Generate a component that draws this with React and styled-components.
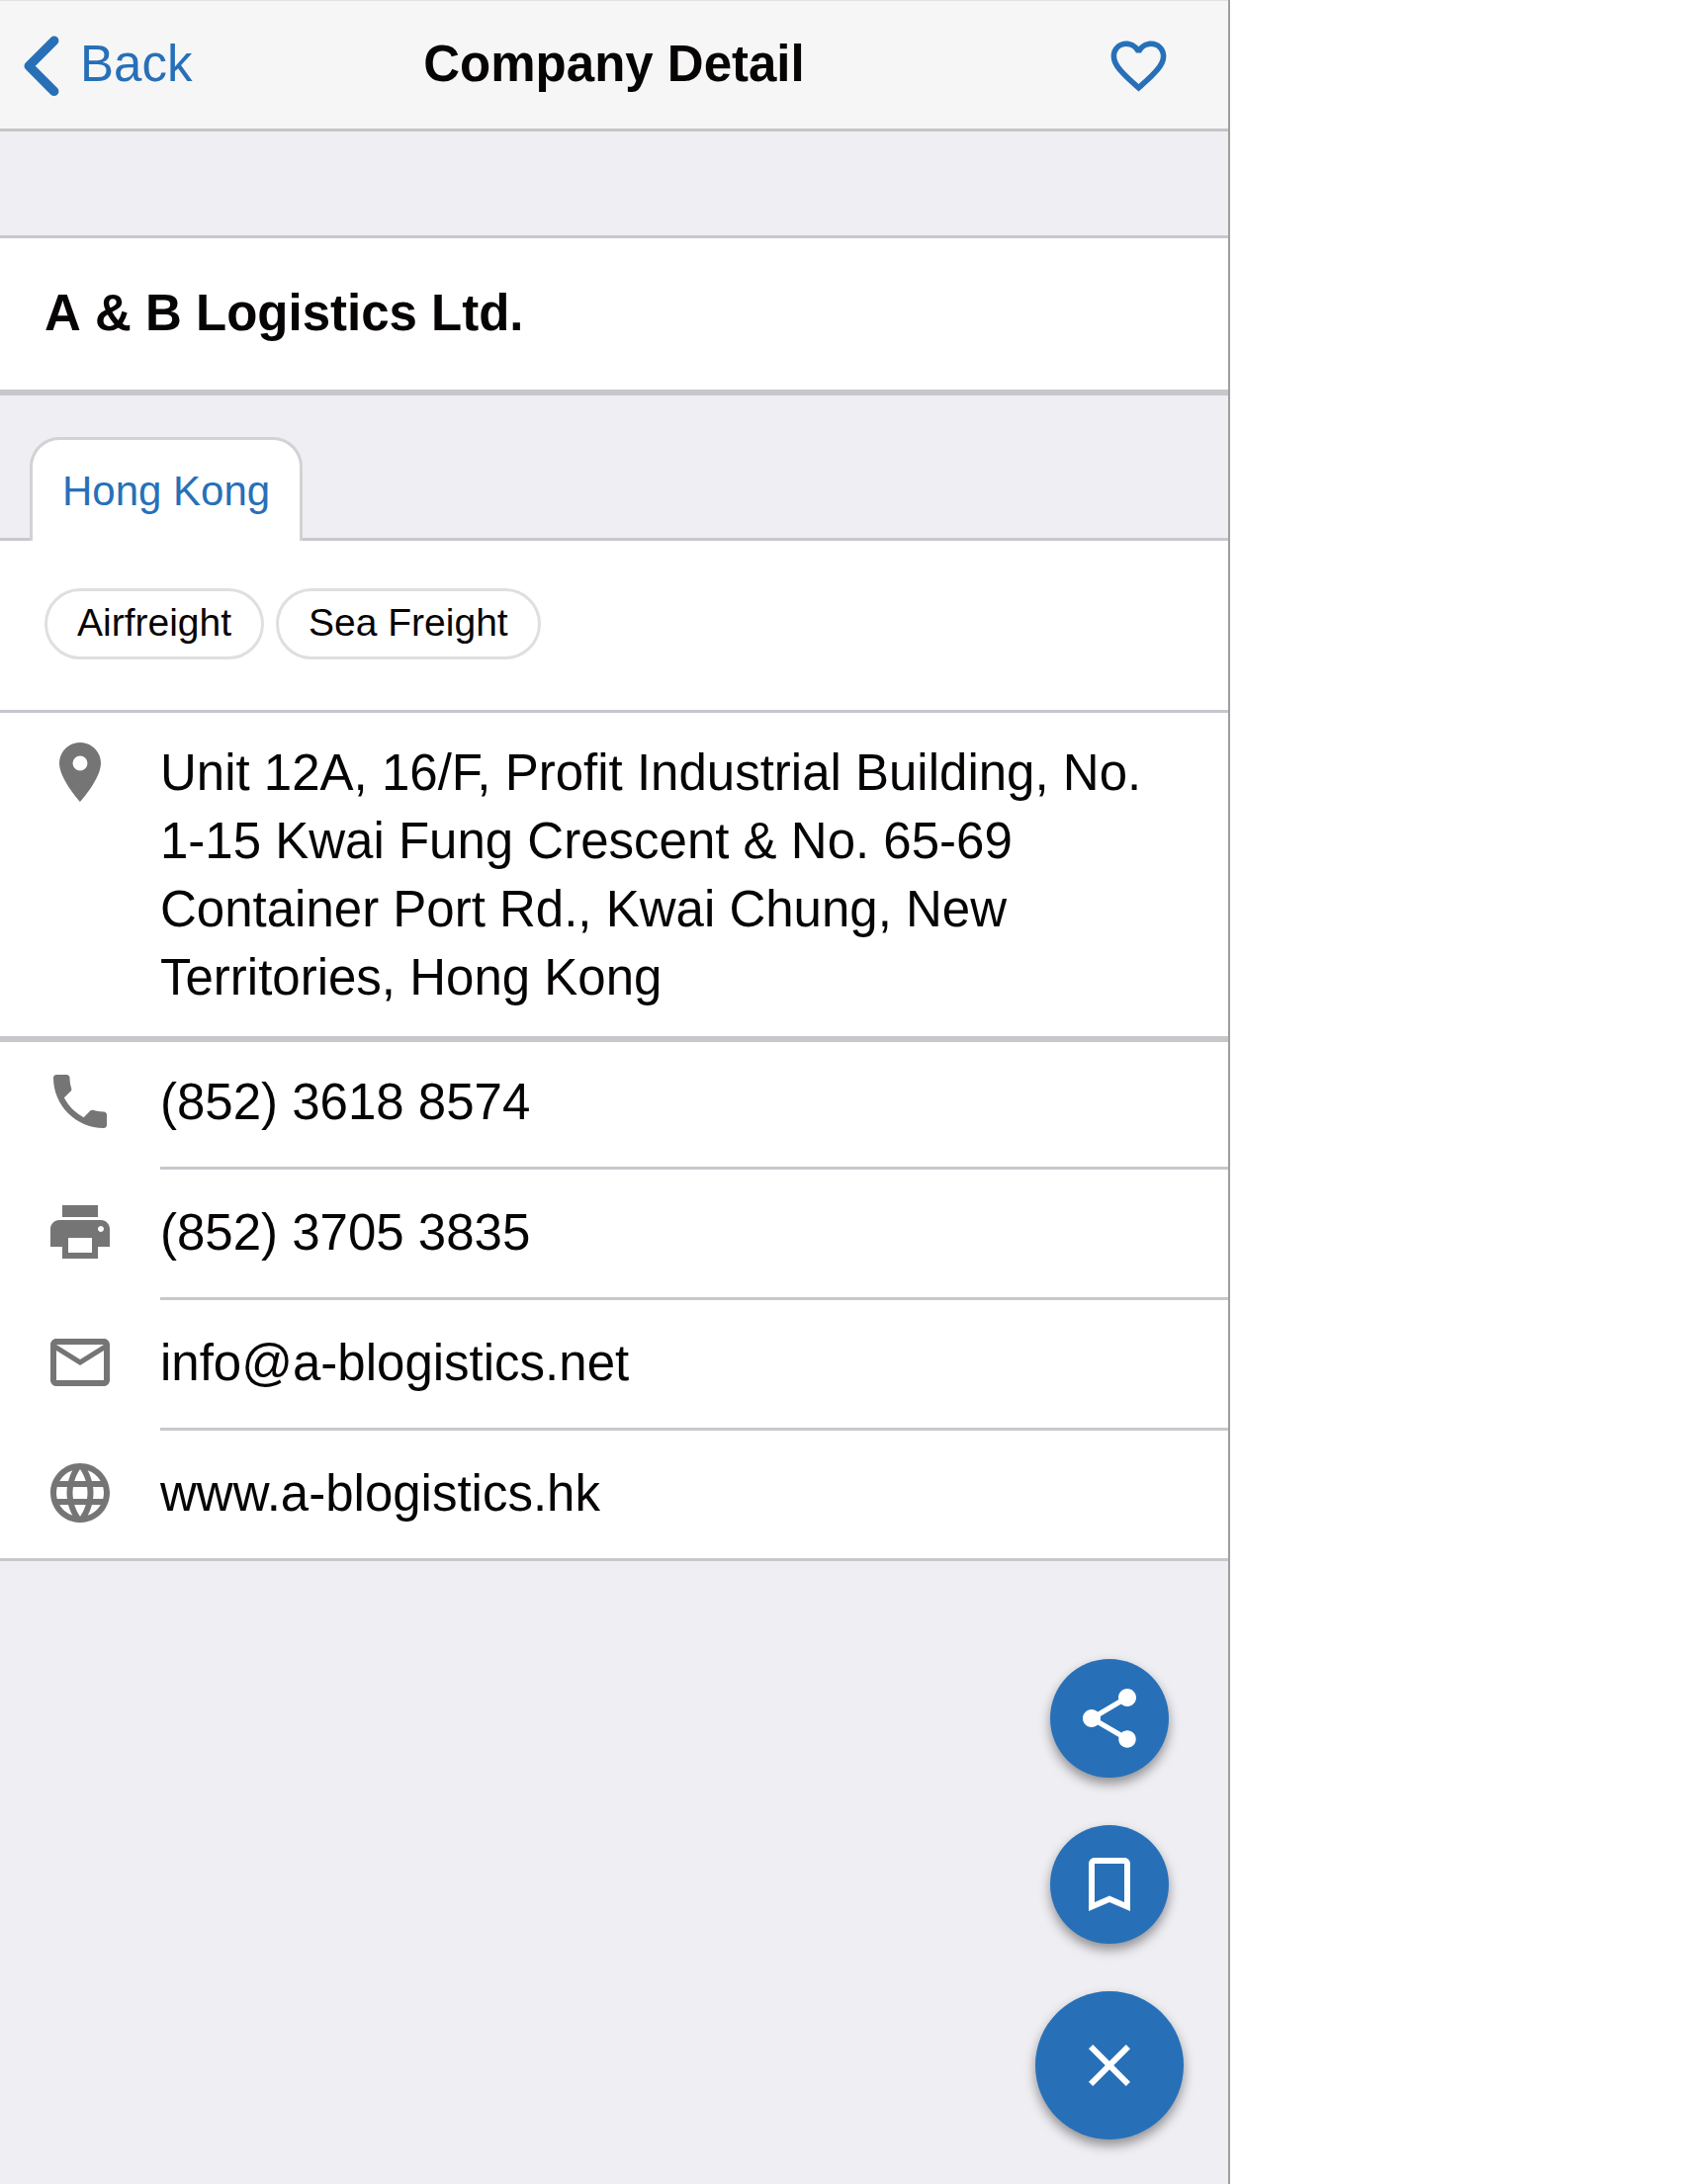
import React from 'react'
import styled, { createGlobalStyle } from 'styled-components'
import {
  MdBookmarkBorder,
  MdClose,
  MdFavoriteBorder,
  MdLanguage,
  MdMailOutline,
  MdPhone,
  MdPlace,
  MdPrint,
  MdShare,
} from 'react-icons/md'

const services = ['Airfreight', 'Sea Freight']

const contacts = [
  { icon: MdPhone, label: '(852) 3618 8574', href: 'tel:+85236188574' },
  { icon: MdPrint, label: '(852) 3705 3835', href: 'tel:+85237053835' },
  { icon: MdMailOutline, label: 'info@a-blogistics.net', href: 'mailto:info@a-blogistics.net' },
  { icon: MdLanguage, label: 'www.a-blogistics.hk', href: 'http://www.a-blogistics.hk' },
]

export default function App() {
  return (
    <>
      <GlobalStyle />
      <Screen>
        <Header>
          <BackButton type='button'>
            <svg width='36' height='62' viewBox='0 0 36 62' aria-hidden='true'>
              <path
                d='M30.7 5.2 L5.2 30.8 L30.7 56.4'
                fill='none'
                stroke='currentColor'
                strokeWidth='9.4'
                strokeLinecap='round'
                strokeLinejoin='round'
              />
            </svg>
            <span>Back</span>
          </BackButton>
          <HeaderTitle>Company Detail</HeaderTitle>
          <LikeButton type='button' aria-label='Add to favourites'>
            <MdFavoriteBorder />
          </LikeButton>
        </Header>

        <main>
          <Company>
            <h2>A &amp; B Logistics Ltd.</h2>
          </Company>

          <Tabs role='tablist'>
            <Tab type='button' role='tab' aria-selected='true'>Hong Kong</Tab>
          </Tabs>

          <Panel role='tabpanel'>
            <Chips>
              {services.map((name) => (
                <Chip key={name}>{name}</Chip>
              ))}
            </Chips>
            <Address>
              <MdPlace />
              <p>
                Unit 12A, 16/F, Profit Industrial Building, No. 1-15 Kwai Fung Crescent &amp; No.
                65-69 Container Port Rd., Kwai Chung, New Territories, Hong Kong
              </p>
            </Address>
            <Contacts>
              {contacts.map(({ icon: Icon, label, href }) => (
                <Contact key={label}>
                  <Icon />
                  <a href={href}>{label}</a>
                </Contact>
              ))}
            </Contacts>
          </Panel>
        </main>

        <Actions>
          <Fab type='button' aria-label='Share'><MdShare /></Fab>
          <Fab type='button' aria-label='Bookmark'><MdBookmarkBorder /></Fab>
          <Fab type='button' aria-label='Close' $large><MdClose /></Fab>
        </Actions>
      </Screen>
    </>
  )
}

const GlobalStyle = createGlobalStyle`
  * {
    box-sizing: border-box;
  }
  body {
    margin: 0;
    background-color: #fff;
    color: #070404;
    font-family: "Liberation Sans", Arial, sans-serif;
    font-size: 51px;
  }
  h1, h2, p, ul {
    margin: 0;
    padding: 0;
    font-size: inherit;
  }
  button {
    margin: 0;
    padding: 0;
    border: none;
    background: none;
    font: inherit;
    cursor: pointer;
  }
  svg {
    display: block;
    flex-shrink: 0;
  }
`;

const Screen = styled.div`
  position: relative;
  width: 100%;
  max-width: 1244px;
  min-height: 100vh;
  background-color: #efeef3;
  border-right: 2px solid #9e9e9e;
`;

const Header = styled.header`
  display: grid;
  grid-template-columns: 1fr auto 1fr;
  align-items: center;
  height: 133px;
  padding: 2px 24px 0;
  background-color: #f6f6f6;
  border-top: 1px solid #e2e2e2;
  border-bottom: 3px solid #c5c5c6;
`;

const BackButton = styled.button`
  justify-self: start;
  display: flex;
  align-items: center;
  gap: 21px;
  color: #2770b8;
  span {
    padding-bottom: 3px;
    line-height: 60px;
  }
`;

const HeaderTitle = styled.h1`
  padding-bottom: 3px;
  line-height: 60px;
`;

const LikeButton = styled.button`
  justify-self: end;
  margin-right: 33px;
  color: #2770b8;
  svg {
    width: 67px;
    height: 67px;
  }
`;

const Company = styled.section`
  margin-top: 105px;
  padding: 0 45px 1px;
  background-color: #fff;
  border-top: 3px solid #c8c7cc;
  border-bottom: 6px solid #c8c7cc;
  h2 {
    font-kerning: none;
    line-height: 152px;
  }
`;

const Tabs = styled.div`
  display: flex;
  padding: 42px 30px 0;
  border-bottom: 3px solid #c8c7cc;
`;

const Tab = styled.button`
  margin-bottom: -3px;
  padding: 2px 30px 0;
  background-color: #fff;
  border: 3px solid #d2d2d2;
  border-bottom: none;
  border-radius: 30px 30px 0 0;
  color: #2770b8;
  font-size: 42px;
  line-height: 100px;
`;

const Panel = styled.section`
  background-color: #fff;
`;

const Chips = styled.ul`
  display: flex;
  flex-wrap: wrap;
  gap: 12px;
  padding: 48px 45px 51px;
  border-bottom: 3px solid #c8c7cc;
  list-style: none;
`;

const Chip = styled.li`
  height: 72px;
  padding: 0 30px;
  border: 3px solid #dfdfdf;
  border-radius: 36px;
  font-size: 39px;
  line-height: 63px;
`;

const Address = styled.div`
  display: flex;
  gap: 45px;
  padding: 24px 45px;
  border-bottom: 6px solid #c8c7cc;
  svg {
    width: 72px;
    height: 72px;
    color: #757575;
  }
  p {
    padding: 2px 0 1px;
    line-height: 69px;
  }
`;

const Contacts = styled.ul`
  margin-top: -3px;
  border-bottom: 3px solid #c8c7cc;
  list-style: none;
`;

const Contact = styled.li`
  display: flex;
  gap: 45px;
  padding-left: 45px;
  svg {
    width: 72px;
    height: 72px;
    margin-top: 27px;
    color: #757575;
  }
  a {
    flex: 1;
    padding: 28px 0 29px;
    border-bottom: 3px solid #c8c7cc;
    color: inherit;
    line-height: 72px;
    text-decoration: none;
  }
  &:last-child a {
    border-bottom: none;
  }
`;

const Actions = styled.div`
  position: absolute;
  right: 45px;
  bottom: 45px;
  display: flex;
  flex-direction: column;
  align-items: center;
  gap: 48px;
`;

const Fab = styled.button`
  display: flex;
  align-items: center;
  justify-content: center;
  width: ${({ $large }) => ($large ? '150px' : '120px')};
  height: ${({ $large }) => ($large ? '150px' : '120px')};
  border-radius: 50%;
  background-color: #2770b8;
  box-shadow: 0 6px 12px rgba(0, 0, 0, 0.4);
  color: #fff;
  svg {
    width: 72px;
    height: 72px;
  }
`;
